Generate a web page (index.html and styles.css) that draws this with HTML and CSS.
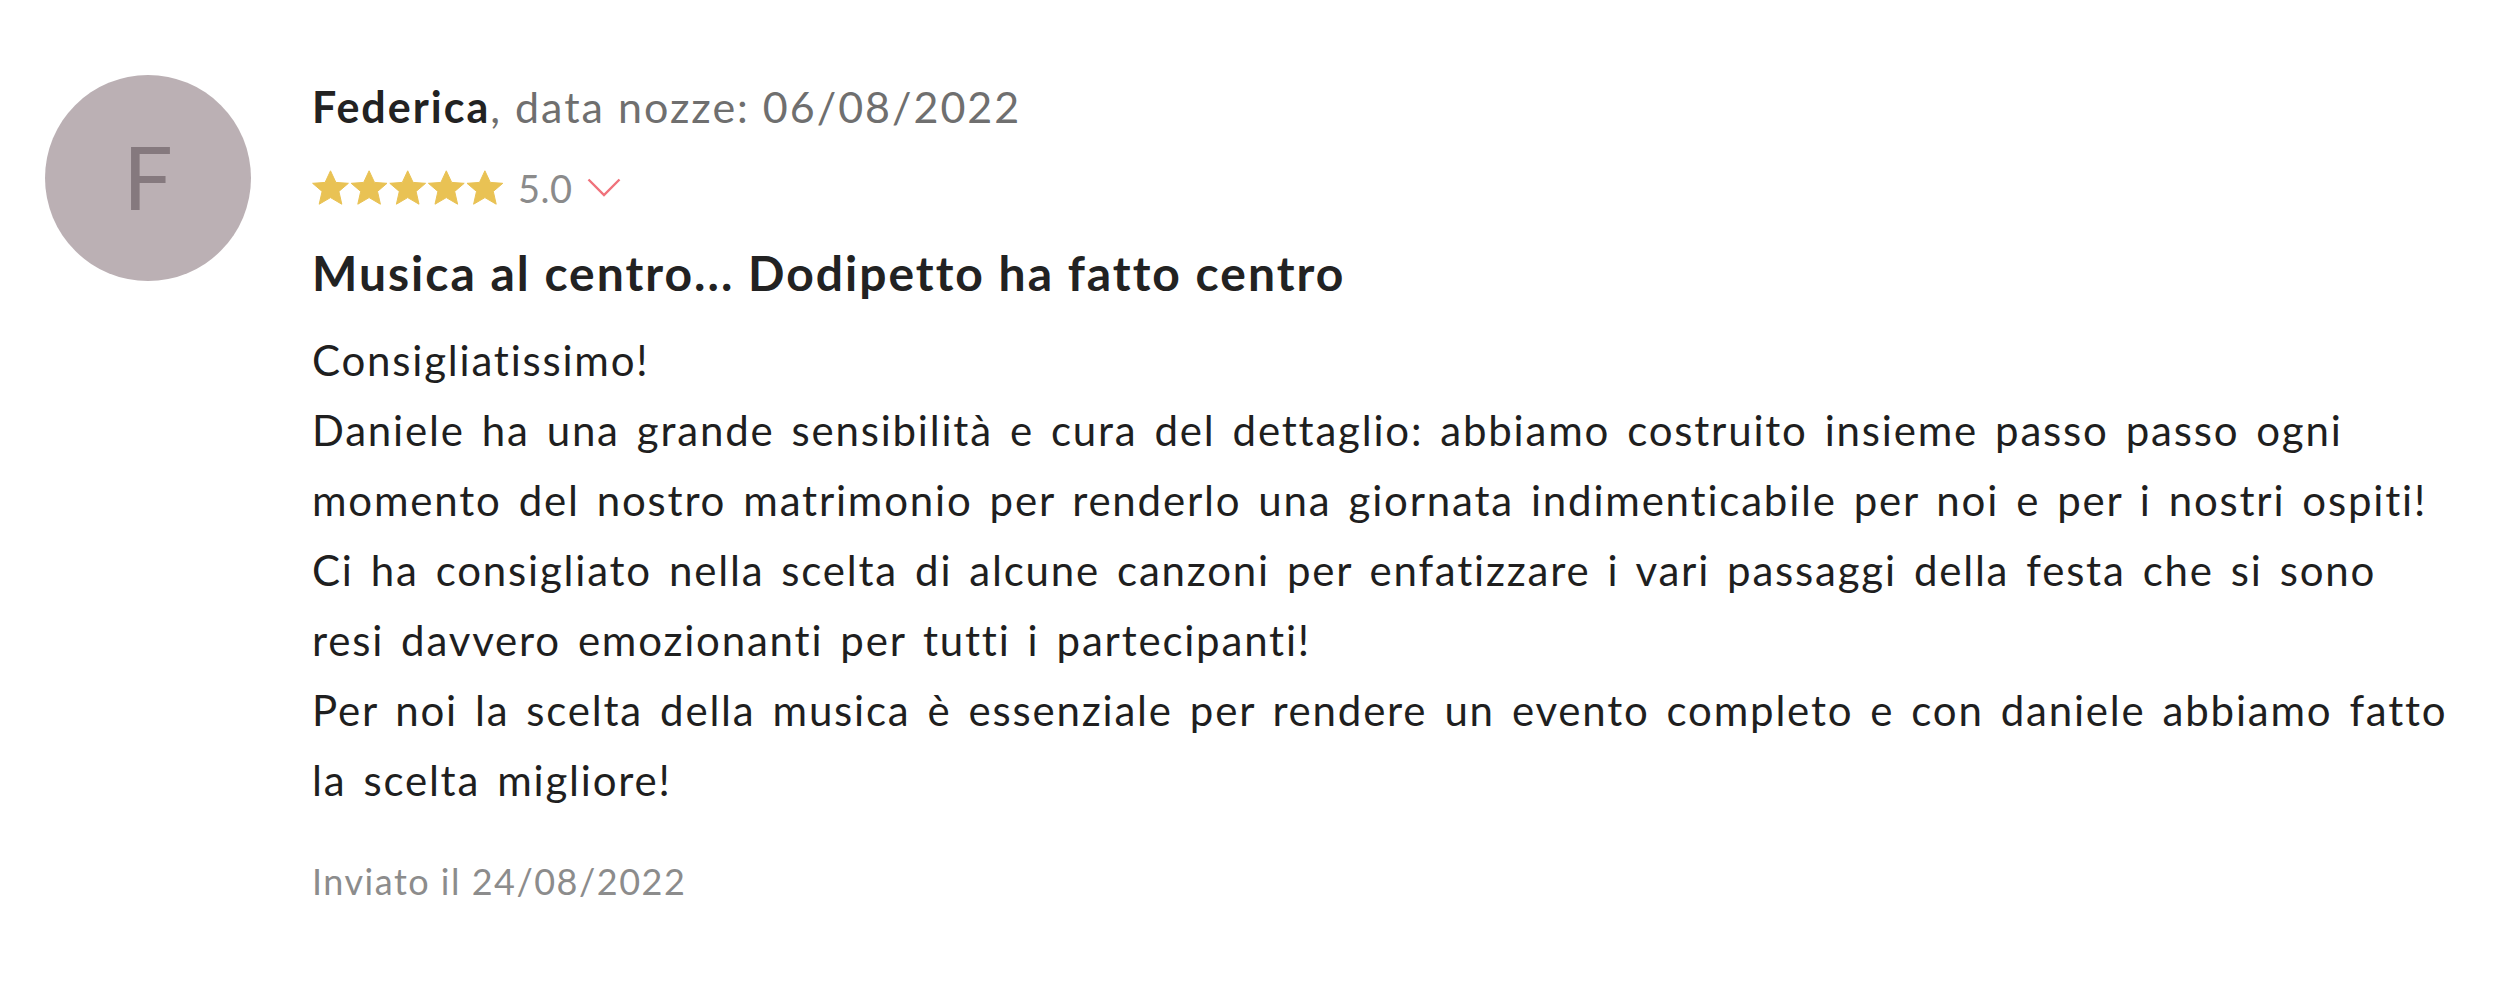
FILE: index.html
```html
<!DOCTYPE html>
<html lang="it">
<head>
<meta charset="utf-8">
<title>Recensione</title>
<link rel="stylesheet" href="styles.css">
</head>
<body>
<article class="review">
  <div class="avatar"><span class="avatar-letter">F</span></div>
  <div class="review-body">
    <p class="author"><strong class="author-name">Federica</strong><span class="author-meta">, data nozze: 06/08/2022</span></p>
    <div class="rating">
      <svg class="stars" width="192" height="36" viewBox="0 0 192 36" aria-hidden="true">
        <defs>
          <polygon id="st" points="18.5,0.8 23.9,12.4 36.4,13.3 26.9,21.4 29.8,34.2 18.5,27.6 7.2,34.2 10.1,21.4 0.6,13.3 13.1,12.4" stroke="#E9C254" stroke-width="1" stroke-linejoin="round"/>
        </defs>
        <g fill="#E9C254">
          <use href="#st"/>
          <use href="#st" x="38.6"/>
          <use href="#st" x="77.2"/>
          <use href="#st" x="115.8"/>
          <use href="#st" x="154.4"/>
        </g>
      </svg>
      <span class="score">5.0</span>
      <svg class="chevron" width="34" height="19" viewBox="0 0 34 19" aria-hidden="true">
        <polyline points="1.5,1.5 17,17 32.5,1.5" fill="none" stroke="#F0727B" stroke-width="2.4"/>
      </svg>
    </div>
    <h3 class="title">Musica al centro... Dodipetto ha fatto centro</h3>
    <p class="text">Consigliatissimo!<br>Daniele ha una grande sensibilità e cura del dettaglio: abbiamo costruito insieme passo passo ogni<br>momento del nostro matrimonio per renderlo una giornata indimenticabile per noi e per i nostri ospiti!<br>Ci ha consigliato nella scelta di alcune canzoni per enfatizzare i vari passaggi della festa che si sono<br>resi davvero emozionanti per tutti i partecipanti!<br>Per noi la scelta della musica è essenziale per rendere un evento completo e con daniele abbiamo fatto<br>la scelta migliore!</p>
    <p class="sent">Inviato il 24/08/2022</p>
  </div>
</article>
</body>
</html>
```
FILE: styles.css
```css
html, body {
  margin: 0;
  padding: 0;
  background: #ffffff;
}

body {
  font-family: "Lato", "Liberation Sans", sans-serif;
  color: #222222;
}

.review {
  display: flex;
  align-items: flex-start;
  gap: 61px;
  padding: 75px 40px 0 45px;
}

.avatar {
  flex: 0 0 206px;
  width: 206px;
  height: 206px;
  border-radius: 50%;
  background: #bbb0b4;
  display: flex;
  align-items: center;
  justify-content: center;
}

.avatar-letter {
  font-family: "Lato", "Liberation Sans", sans-serif;
  font-weight: 400;
  font-size: 88px;
  line-height: 88px;
  color: #85797e;
  margin-top: -5px;
}

.review-body {
  flex: 1;
  min-width: 0;
}

.author {
  margin: 0;
  font-size: 43px;
  line-height: 64px;
  letter-spacing: 2px;
  white-space: nowrap;
}

.author-name {
  font-weight: 700;
  color: #222222;
}

.author-meta {
  color: #6f6f6f;
}

.rating {
  display: flex;
  align-items: center;
  height: 48px;
  margin-top: 24.5px;
}

.stars {
  display: block;
  flex: 0 0 auto;
}

.score {
  margin-left: 14px;
  font-size: 38px;
  line-height: 48px;
  letter-spacing: 0.5px;
  color: #8b8b8b;
}

.chevron {
  display: block;
  margin-left: 14px;
}

.title {
  margin: 31.6px 0 0;
  font-size: 48px;
  line-height: 60px;
  font-weight: 700;
  letter-spacing: 2px;
  color: #222222;
  white-space: nowrap;
}

.text {
  margin: 22.4px 0 0;
  font-size: 42px;
  line-height: 70px;
  letter-spacing: 1.8px;
  word-spacing: 4.5px;
  color: #1f1f1f;
  white-space: nowrap;
}

.sent {
  margin: 40.5px 0 0;
  font-size: 36px;
  line-height: 50px;
  letter-spacing: 1.5px;
  color: #8c8c8c;
}
```
